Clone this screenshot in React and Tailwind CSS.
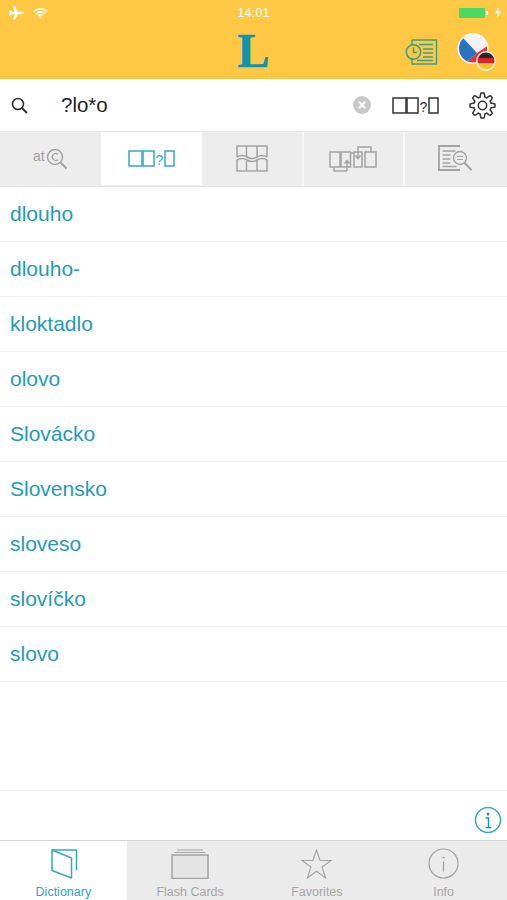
import React from "react";

const WORDS = ["dlouho","dlouho-","kloktadlo","olovo","Slovácko","Slovensko","sloveso","slovíčko","slovo"];

const GEAR_PATH = (() => {
  const pts = [];
  const n = 160;
  for (let i = 0; i < n; i++) {
    const t = (i / n) * Math.PI * 2;
    const wave = Math.max(-1, Math.min(1, 1.7 * Math.cos(8 * t)));
    const r = 10.6 + 1.9 * wave;
    pts.push(`${(13.5 + r * Math.cos(t)).toFixed(2)} ${(13.5 + r * Math.sin(t)).toFixed(2)}`);
  }
  return "M" + pts.join("L") + "z";
})();

function Pattern({ color }) {
  return (
    <svg width="47" height="17" viewBox="0 0 47 17" fill="none" stroke={color} strokeWidth="1.500" className="block">
      <rect x="1" y="1" width="13" height="15" />
      <rect x="15" y="1" width="11" height="15" />
      <rect x="37" y="1" width="9" height="15" />
      <text x="31.500" y="14.500" fontSize="14" textAnchor="middle" fill={color} stroke="none" fontFamily="'Liberation Sans', sans-serif">?</text>
    </svg>
  );
}

function TabAt() {
  return (
    <svg width="36" height="24" viewBox="0 0 36 24" fill="none" stroke="#a3a3a3" strokeWidth="1.500" className="block">
      <text x="0" y="14" fontSize="14" fill="#a0a0a0" stroke="none" fontFamily="'Liberation Sans', sans-serif">at</text>
      <circle cx="22" cy="10" r="7.500" />
      <path d="M25 7.500a3.400 3.400 0 1 0 0 5" strokeWidth="1.300" />
      <path d="M27.500 15.500l6 6" strokeWidth="2" />
    </svg>
  );
}

function TabGrid() {
  return (
    <svg width="32" height="27" viewBox="0 0 32 27" fill="none" stroke="#a3a3a3" strokeWidth="1.500" className="block">
      <path d="M1 12V1h9.500v10M11 1h10v10M21.500 1H31v11" />
      <path d="M1 12q5-3 10 0t10 0 10 0" />
      <path d="M1 15q5-3 10 0t10 0 10 0" />
      <path d="M1 15v11h9.500V16M11 26h10V16M21.500 26H31V15" />
    </svg>
  );
}

function TabAnagram() {
  return (
    <svg width="49" height="26" viewBox="0 0 49 26" fill="none" stroke="#a3a3a3" strokeWidth="1.500" className="block">
      <rect x="1" y="6" width="10" height="15" /><rect x="12" y="6" width="9.500" height="15" />
      <path d="M5 21v4h13M18 25V15M15.500 17.500l2.500-3 2.500 3M22 7h3" />
      <rect x="25" y="6" width="8" height="15" /><rect x="36" y="6" width="11" height="15" />
      <path d="M29 6V1h13v5M29 4v8M26.500 9.500l2.500 3 2.500-3" />
    </svg>
  );
}

function TabDoc() {
  return (
    <svg width="36" height="27" viewBox="0 0 36 27" fill="none" stroke="#a3a3a3" strokeWidth="1.400" className="block">
      <path d="M22 1H1v24h21" strokeWidth="1.800" />
      <path d="M4.500 6h13M4.500 10h8M4.500 14h8M4.500 18h8M4.500 21.500h14" />
      <circle cx="22" cy="13" r="6.500" />
      <path d="M19 11.500h6M19 14.500h6" strokeWidth="1.200" />
      <path d="M26.500 18l7 7" strokeWidth="1.800" />
    </svg>
  );
}

function Flag() {
  return (
    <svg width="42" height="42" viewBox="0 0 42 42" className="block">
      <defs>
        <clipPath id="cz"><circle cx="16" cy="17.500" r="14" /></clipPath>
        <clipPath id="de"><circle cx="29" cy="30" r="8.500" /></clipPath>
      </defs>
      <circle cx="16" cy="17.500" r="15.500" fill="#fbf6ee" />
      <g clipPath="url(#cz)">
        <rect x="0" y="0" width="32" height="34" fill="#f3f2f6" />
        <path d="M20 22L32 14V35H5z" fill="#e8323f" />
        <path d="M0 .500L20 22 5 35H0z" fill="#2a72c4" />
      </g>
      <circle cx="29" cy="30" r="10" fill="#fbf3df" />
      <g clipPath="url(#de)">
        <rect x="19" y="20" width="20" height="7" fill="#2a2a2a" />
        <rect x="19" y="27" width="20" height="5.500" fill="#d8242c" />
        <rect x="19" y="32.500" width="20" height="6.500" fill="#f4c430" />
      </g>
    </svg>
  );
}

function BottomTab({ label, active, children }) {
  return (
    <div className={`flex-1 flex flex-col items-center h-full pt-[7px] ${active ? "bg-white" : "bg-[#ebebeb]"}`}>
      <div className="h-[31px] flex items-center justify-center">{children}</div>
      <span className={`mt-[6px] text-[12.500px] leading-[14px] ${active ? "text-[#2fa3c4]" : "text-[#a6a6a6]"}`}>{label}</span>
    </div>
  );
}

export default function App() {
  return (
    <div className="w-[507px] h-[900px] flex flex-col bg-white overflow-hidden font-['Helvetica','Liberation_Sans',Arial,sans-serif]">
      <div className="h-[79px] bg-[#ffc844] flex flex-col shrink-0">
        <div className="h-[27px] relative flex items-center justify-between pl-[8px] pr-[6px] pt-[2px] text-white">
          <div className="flex items-center gap-[9px] -mt-[4px]">
            <svg width="16" height="16" viewBox="0 0 16 16" fill="#fff"><path d="M15.500 8c0-.8-1-1.200-2-1.200H10L6.500 1H5l1.700 5.800H3.300L2 5H.800l.7 3-.7 3H2l1.300-1.800h3.400L5 15h1.500L10 9.200h3.500c1 0 2-.4 2-1.200z" /></svg>
            <svg width="15" height="12" viewBox="0 0 15 12" fill="none" stroke="#fff" strokeWidth="1.600"><path d="M1 4.500a9 9 0 0 1 13 0M3.200 6.700a6 6 0 0 1 8.600 0M5.300 8.800a3 3 0 0 1 4.400 0" /><circle cx="7.500" cy="10.500" r="1" fill="#fff" stroke="none" /></svg>
          </div>
          <span className="absolute left-0 right-0 text-center text-[13px] -mt-[3px] pointer-events-none">14:01</span>
          <div className="flex items-center gap-[1px] -mt-[4px]">
            <div className="w-[26px] h-[10px] bg-[#4cd964] rounded-[1px]" />
            <div className="w-[2px] h-[4px] bg-white/80 mr-[6px]" />
            <svg width="6" height="11" viewBox="0 0 6 11" fill="#fff"><path d="M3.800 0L0 6.200h2.300L1.800 11 6 4.500H3.400z" /></svg>
          </div>
        </div>
        <div className="flex-1 relative flex items-center justify-center">
          <span className="text-[#0f93b0] text-[48px] leading-[48px] font-bold font-['Liberation_Serif',serif] -mt-[5px] [-webkit-text-stroke:0.6px_#0f93b0]">L</span>
          <div className="absolute left-[405px] top-[12px]">
            <svg width="33" height="26" viewBox="0 0 33 26" fill="none" stroke="#3f9f83" strokeWidth="1.400" className="block">
              <path d="M7 1h24.500v24H7v-6M7 1v5" />
              <circle cx="8.500" cy="13" r="7.200" strokeWidth="1.600" />
              <path d="M8.500 8.500v5h3.500" />
              <path d="M14 5.500h14M18 10h10M18 14h10M18 18h10M12 21.500h16" />
            </svg>
          </div>
          <div className="absolute left-[457px] top-[4px]"><Flag /></div>
        </div>
      </div>

      <div className="h-[52px] flex items-center relative shrink-0 bg-white">
        <svg className="absolute left-[11px] top-[18px]" width="17" height="17" viewBox="0 0 17 17" fill="none" stroke="#333" strokeWidth="1.600"><circle cx="7" cy="7" r="5.500" /><path d="M11 11l5 5" strokeWidth="2" /></svg>
        <span className="ml-[61px] text-[20.500px] leading-none text-[#222]">?lo*o</span>
        <div className="ml-auto flex items-center">
          <svg width="18" height="18" viewBox="0 0 18 18" className="mr-[21px]"><circle cx="9" cy="9" r="9" fill="#c9c9c9" /><path d="M5.800 5.800l6.400 6.400M12.200 5.800l-6.400 6.400" stroke="#fff" strokeWidth="2" /></svg>
          <div className="mr-[30px]"><Pattern color="#333" /></div>
          <svg width="27" height="27" viewBox="0 0 27 27" fill="none" stroke="#333" strokeWidth="1.500" strokeLinejoin="round" className="mr-[11px]">
            <path d={GEAR_PATH} />
            <circle cx="13.500" cy="13.500" r="4.200" />
          </svg>
        </div>
      </div>

      <div className="h-[56px] flex shrink-0 bg-[#ededed] border-t border-b border-[#e6e6e6] pb-[1px]">
        <div className="w-[101px] flex items-center justify-center pl-[1px]"><TabAt /></div>
        <div className="w-[101px] bg-white flex items-center justify-center"><Pattern color="#36a9c6" /></div>
        <div className="w-[102px] flex items-center justify-center border-r-2 border-[#f7f7f7]"><TabGrid /></div>
        <div className="w-[101px] flex items-center justify-center border-r-2 border-[#f7f7f7]"><TabAnagram /></div>
        <div className="flex-1 flex items-center justify-center"><TabDoc /></div>
      </div>

      <div className="flex-1 flex flex-col">
        {WORDS.map((w) => (
          <div key={w} className="h-[55px] shrink-0 flex items-center pl-[10px] text-[21px] text-[#1f9bbc] border-b border-[#f1f1f1]">{w}</div>
        ))}
      </div>

      <div className="h-[50px] shrink-0 border-t border-[#f1f1f1] flex items-center justify-end pr-[5px] pt-[8px]">
        <svg width="28" height="28" viewBox="0 0 28 28" fill="none" className="block">
          <circle cx="14" cy="14" r="12.500" stroke="#38a9c8" strokeWidth="1.500" />
          <circle cx="14" cy="8" r="1.500" fill="#1793b2" />
          <path d="M11.500 12h3v9.500M11.500 21.500h6" stroke="#1793b2" strokeWidth="1.400" />
        </svg>
      </div>

      <div className="h-[60px] shrink-0 flex border-t border-[#d4d4d4]">
        <BottomTab label="Dictionary" active>
          <svg width="28" height="31" viewBox="0 0 28 31" fill="none" stroke="#36a9c6" strokeWidth="1.500" strokeLinejoin="round" className="block ml-[2px]">
            <path d="M2 2h24.500v20" />
            <path d="M2 2l19.500 8v20L2 22.500z" />
          </svg>
        </BottomTab>
        <BottomTab label="Flash Cards">
          <svg width="38" height="30" viewBox="0 0 38 30" fill="none" stroke="#a3a3a3" className="block">
            <path d="M6 1h26M3.500 3.500h31" strokeWidth="1.200" />
            <rect x="1" y="6" width="36" height="23.500" strokeWidth="1.500" fill="#e4e4e4" />
          </svg>
        </BottomTab>
        <BottomTab label="Favorites">
          <svg width="31" height="30" viewBox="0 0 31 30" fill="none" stroke="#a3a3a3" strokeWidth="1.100" strokeLinejoin="miter" className="block">
            <path d="M15.500 1l3.600 10.500h11l-9 6.500 3.500 11-9.100-6.800-9.100 6.800 3.500-11-9-6.500h11z" />
          </svg>
        </BottomTab>
        <BottomTab label="Info">
          <svg width="31" height="31" viewBox="0 0 31 31" fill="none" stroke="#a3a3a3" className="block">
            <circle cx="15.500" cy="15.500" r="14.500" strokeWidth="1.200" />
            <circle cx="15.500" cy="9.500" r="1.100" fill="#a3a3a3" stroke="none" />
            <path d="M15.500 13.500v10" strokeWidth="1.300" />
          </svg>
        </BottomTab>
      </div>
    </div>
  );
}
